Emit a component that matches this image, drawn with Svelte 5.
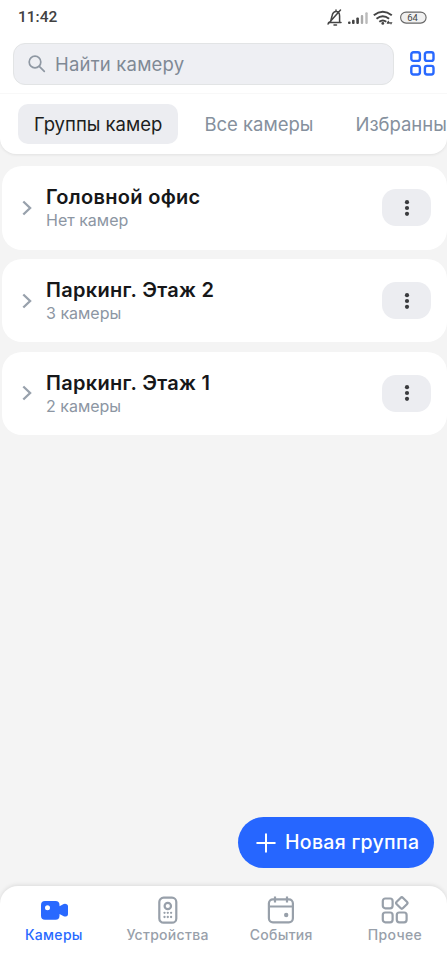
<script>
    let active = $state('groups')
    let query = $state('')
    let page = $state('cameras')

    const tabs = [
        { id: 'groups', title: 'Группы камер' },
        { id: 'all', title: 'Все камеры' },
        { id: 'favorite', title: 'Избранные' }
    ]

    const groups = [
        { name: 'Головной офис', count: 'Нет камер' },
        { name: 'Паркинг. Этаж 2', count: '3 камеры' },
        { name: 'Паркинг. Этаж 1', count: '2 камеры' }
    ]

    const pages = [
        { id: 'cameras', title: 'Камеры' },
        { id: 'devices', title: 'Устройства' },
        { id: 'events', title: 'События' },
        { id: 'other', title: 'Прочее' }
    ]
</script>

<div class="app">
    <header>
        <div class="status">
            <time>11:42</time>
            <svg class="signals" width="102" height="20" viewBox="0 0 102 20" fill="none">
                <g stroke="#444" stroke-width="1.5" stroke-linecap="round" stroke-linejoin="round">
                    <path d="M3.500 15.500h12.500M5.500 15 7 9c.6-2.900 2-4.500 4.200-4.500 2.500 0 3.400 2 3.400 4.500v6.500M11 4.200V3M9 18h2.500M3 17 15.500 3" />
                </g>
                <rect x="23" y="14.500" width="2.600" height="2.500" rx="1" fill="#444" />
                <rect x="27" y="12.800" width="2.600" height="4.200" rx="1" fill="#444" />
                <rect x="31.300" y="10.500" width="2.600" height="6.500" rx="1" fill="#444" />
                <rect x="35.800" y="8" width="2.400" height="9" rx="1" fill="#aaa" />
                <rect x="40.300" y="5.200" width="2.400" height="11.800" rx="1" fill="#bbb" />
                <g stroke="#444" stroke-width="2">
                    <path d="M48.800 8.200q9-6.800 18 0M51.500 11.700q6.300-4.800 12.600 0M54.300 14.800q3.500-2.600 7 0" />
                </g>
                <circle cx="57.800" cy="16.400" r="1.400" fill="#444" />
                <path d="m61.800 15.700 1.500-2.200 1.500 2.200v1h-3zM64.500 15.200h3l-1.500 2.500z" fill="#444" />
                <rect x="75.600" y="5.100" width="25.500" height="11" rx="5.500" fill="#f0f0f0" stroke="#666" stroke-width="1.100" />
                <text x="87.500" y="14.100" text-anchor="middle" class="battery">64</text>
            </svg>
        </div>

        <div class="search">
            <label>
                <svg width="18" height="18" viewBox="0 0 18 18" fill="none" stroke="#8f98a3" stroke-width="1.700" stroke-linecap="round">
                    <circle cx="7" cy="7" r="5.800" />
                    <path d="m11.300 11.300 5 5" />
                </svg>
                <input bind:value={query} placeholder="Найти камеру">
            </label>
            <button class="view" aria-label="Вид">
                <svg width="25" height="25" viewBox="0 0 25 25" fill="none" stroke="#2969ff" stroke-width="2.400">
                    <rect x="1.300" y="1.300" width="8.600" height="8.600" rx="2.200" />
                    <rect x="14.900" y="1.300" width="8.600" height="8.600" rx="2.200" />
                    <rect x="1.300" y="14.900" width="8.600" height="8.600" rx="2.200" />
                    <rect x="14.900" y="14.900" width="8.600" height="8.600" rx="2.200" />
                </svg>
            </button>
        </div>

        <div class="tabs">
            {#each tabs as tab}
                <button class:active={active === tab.id} onclick={() => active = tab.id}>{tab.title}</button>
            {/each}
        </div>
    </header>

    <main>
        <ul>
            {#each groups as group}
                <li>
                    <svg class="chevron" width="10" height="16" viewBox="0 0 10 16" fill="none" stroke="#98a1ac" stroke-width="2.300">
                        <path d="m1.300 1.500 6.800 6.500-6.800 6.500" />
                    </svg>
                    <div class="group">
                        <strong>{group.name}</strong>
                        <span>{group.count}</span>
                    </div>
                    <button class="more" aria-label="Меню">
                        <svg width="6" height="18" viewBox="0 0 6 18" fill="#3a3b3e">
                            <circle cx="3" cy="3.200" r="2.100" />
                            <circle cx="3" cy="9" r="2.100" />
                            <circle cx="3" cy="14.800" r="2.100" />
                        </svg>
                    </button>
                </li>
            {/each}
        </ul>

        <button class="add">
            <svg width="20" height="20" viewBox="0 0 20 20" stroke="#fff" stroke-width="2" stroke-linecap="round">
                <path d="M10 1.200v17.600M1.200 10h17.600" />
            </svg>
            <span>Новая группа</span>
        </button>
    </main>

    <nav>
        {#each pages as item}
            <button class:active={page === item.id} onclick={() => page = item.id}>
                <svg width="30" height="30" viewBox="0 0 30 30" fill="none" stroke="currentColor" stroke-width="2.200">
                    {#if item.id === 'cameras'}
                        <path fill="currentColor" stroke="none" fill-rule="evenodd" d="M6 6h10.500a4 4 0 0 1 4 4v1.300l4.200-2.200q1.500-.7 3 .1q1.300.6 1.300 2v8q0 1.400-1.300 2q-1.500.7-3 0l-4.200-2.200v1.700a4 4 0 0 1-4 4H6a4 4 0 0 1-4-4V10a4 4 0 0 1 4-4zm2.500 4.300a2.500 2.500 0 1 0 0 5a2.500 2.500 0 0 0 0-5z" />
                    {:else if item.id === 'devices'}
                        <rect x="6.300" y="2.700" width="17" height="25" rx="4.300" />
                        <circle cx="14.800" cy="11" r="3.200" />
                        <path stroke-linecap="round" stroke-width="2.300" d="M11.500 17.800h.01M14.800 17.800h.01M18.100 17.800h.01M11.500 22h.01M14.800 22h.01M18.100 22h.01" />
                    {:else if item.id === 'events'}
                        <rect x="2.900" y="4.300" width="24" height="23" rx="4" />
                        <path d="M3 11.500h24M9 1.500v6M21 1.500v6" />
                        <circle cx="20.200" cy="20" r="2.200" fill="currentColor" stroke="none" />
                    {:else}
                        <rect x="2.800" y="3.500" width="9.800" height="9.800" rx="2.500" />
                        <rect x="2.800" y="17.500" width="9.800" height="9.800" rx="2.500" />
                        <rect x="16.800" y="17.500" width="9.800" height="9.800" rx="2.500" />
                        <rect x="17.300" y="3.500" width="9" height="9" rx="1.800" transform="rotate(45 21.800 8)" />
                    {/if}
                </svg>
                <span>{item.title}</span>
            </button>
        {/each}
    </nav>
</div>

<style>
    :global(body) {
        margin: 0;
        background-color: #f4f4f4;
    }
    .app {
        display: flex;
        flex-direction: column;
        height: 959px;
        overflow: hidden;
        color: #161719;
        font-family: Inter, "Noto Sans", sans-serif;
    }
    button {
        padding: 0;
        border: none;
        background: none;
        color: inherit;
        font: inherit;
    }
    svg {
        display: block;
        flex: none;
    }
    header {
        height: 154px;
        flex: none;
        background-color: #fff;
        border-radius: 0 0 16px 16px;
        box-shadow: 0 1px 3px rgba(0,0,0,.08);
    }
    .status {
        display: flex;
        justify-content: space-between;
        align-items: center;
        height: 34px;
        padding: 0 20px 0 18px;
        font-family: Roboto, sans-serif;
    }
    .status time {
        color: #414141;
        font-size: 15.500px;
        font-weight: 500;
    }
    .battery {
        fill: #444;
        font-size: 9.500px;
        font-weight: 400;
    }
    .search {
        display: flex;
        align-items: center;
        gap: 16px;
        height: 60px;
        padding: 0 12px 0 13px;
        box-sizing: border-box;
        border-bottom: 1px solid #f8f8f8;
    }
    label {
        display: flex;
        align-items: center;
        gap: 9px;
        width: 381px;
        height: 42px;
        box-sizing: border-box;
        padding-left: 14px;
        border: 1px solid #e2e4e5;
        border-radius: 12px;
        background-color: #eeeff3;
    }
    input {
        flex: 1;
        min-width: 0;
        padding: 0;
        border: none;
        outline: none;
        background: none;
        color: #7f8995;
        font: inherit;
        font-size: 18.500px;
        letter-spacing: .2px;
    }
    input::placeholder {
        color: #7f8995;
    }
    .tabs {
        display: flex;
        padding: 10px 0 0 18px;
        gap: 10px;
        overflow: hidden;
    }
    .tabs button {
        flex: none;
        height: 39.500px;
        padding: 0 16px;
        border-radius: 10px;
        color: #85909d;
        font-size: 18.500px;
    }
    .tabs .active {
        background-color: #ecedf1;
        color: #1c1d20;
    }
    main {
        flex: 1;
        display: flex;
        flex-direction: column;
        justify-content: space-between;
        padding: 12px 0 18px;
    }
    ul {
        display: flex;
        flex-direction: column;
        gap: 9.300px;
        margin: 0 0 0 2px;
        padding: 0;
        list-style: none;
    }
    li {
        display: flex;
        align-items: center;
        height: 83.500px;
        box-sizing: border-box;
        padding: 0 16px 0 20px;
        border-radius: 20px;
        background-color: #fff;
    }
    .group {
        display: flex;
        flex: 1;
        flex-direction: column;
        margin: 1px 0 0 14px;
    }
    .group strong {
        font-size: 20px;
        font-weight: 600;
        line-height: 24px;
        letter-spacing: .3px;
    }
    .group span {
        color: #8c96a3;
        font-size: 16px;
        line-height: 22px;
    }
    .more {
        display: flex;
        align-items: center;
        justify-content: center;
        width: 49px;
        height: 37px;
        border-radius: 14px;
        background-color: #ecedf1;
    }
    .add {
        display: flex;
        align-items: center;
        align-self: flex-end;
        gap: 9px;
        width: 196px;
        height: 51px;
        margin-right: 13px;
        padding-left: 18px;
        border-radius: 26px;
        background-color: #2666ff;
        color: #fff;
        font-size: 19.500px;
        font-weight: 500;
        letter-spacing: .3px;
        white-space: nowrap;
    }
    .add span {
        margin-top: -1px;
    }
    nav {
        display: flex;
        flex: none;
        height: 73px;
        border-radius: 18px 18px 0 0;
        background-color: #fff;
        box-shadow: 0 -1px 4px rgba(0,0,0,.1);
    }
    nav button {
        display: flex;
        flex: 1 0 113.700px;
        flex-direction: column;
        align-items: center;
        padding-top: 9px;
        color: #98a0aa;
        font-size: 14px;
        font-weight: 500;
        letter-spacing: .3px;
    }
    nav button:first-child {
        margin-left: -3px;
    }
    nav button span {
        line-height: 20px;
    }
    nav .active {
        color: #2969ff;
    }
</style>
